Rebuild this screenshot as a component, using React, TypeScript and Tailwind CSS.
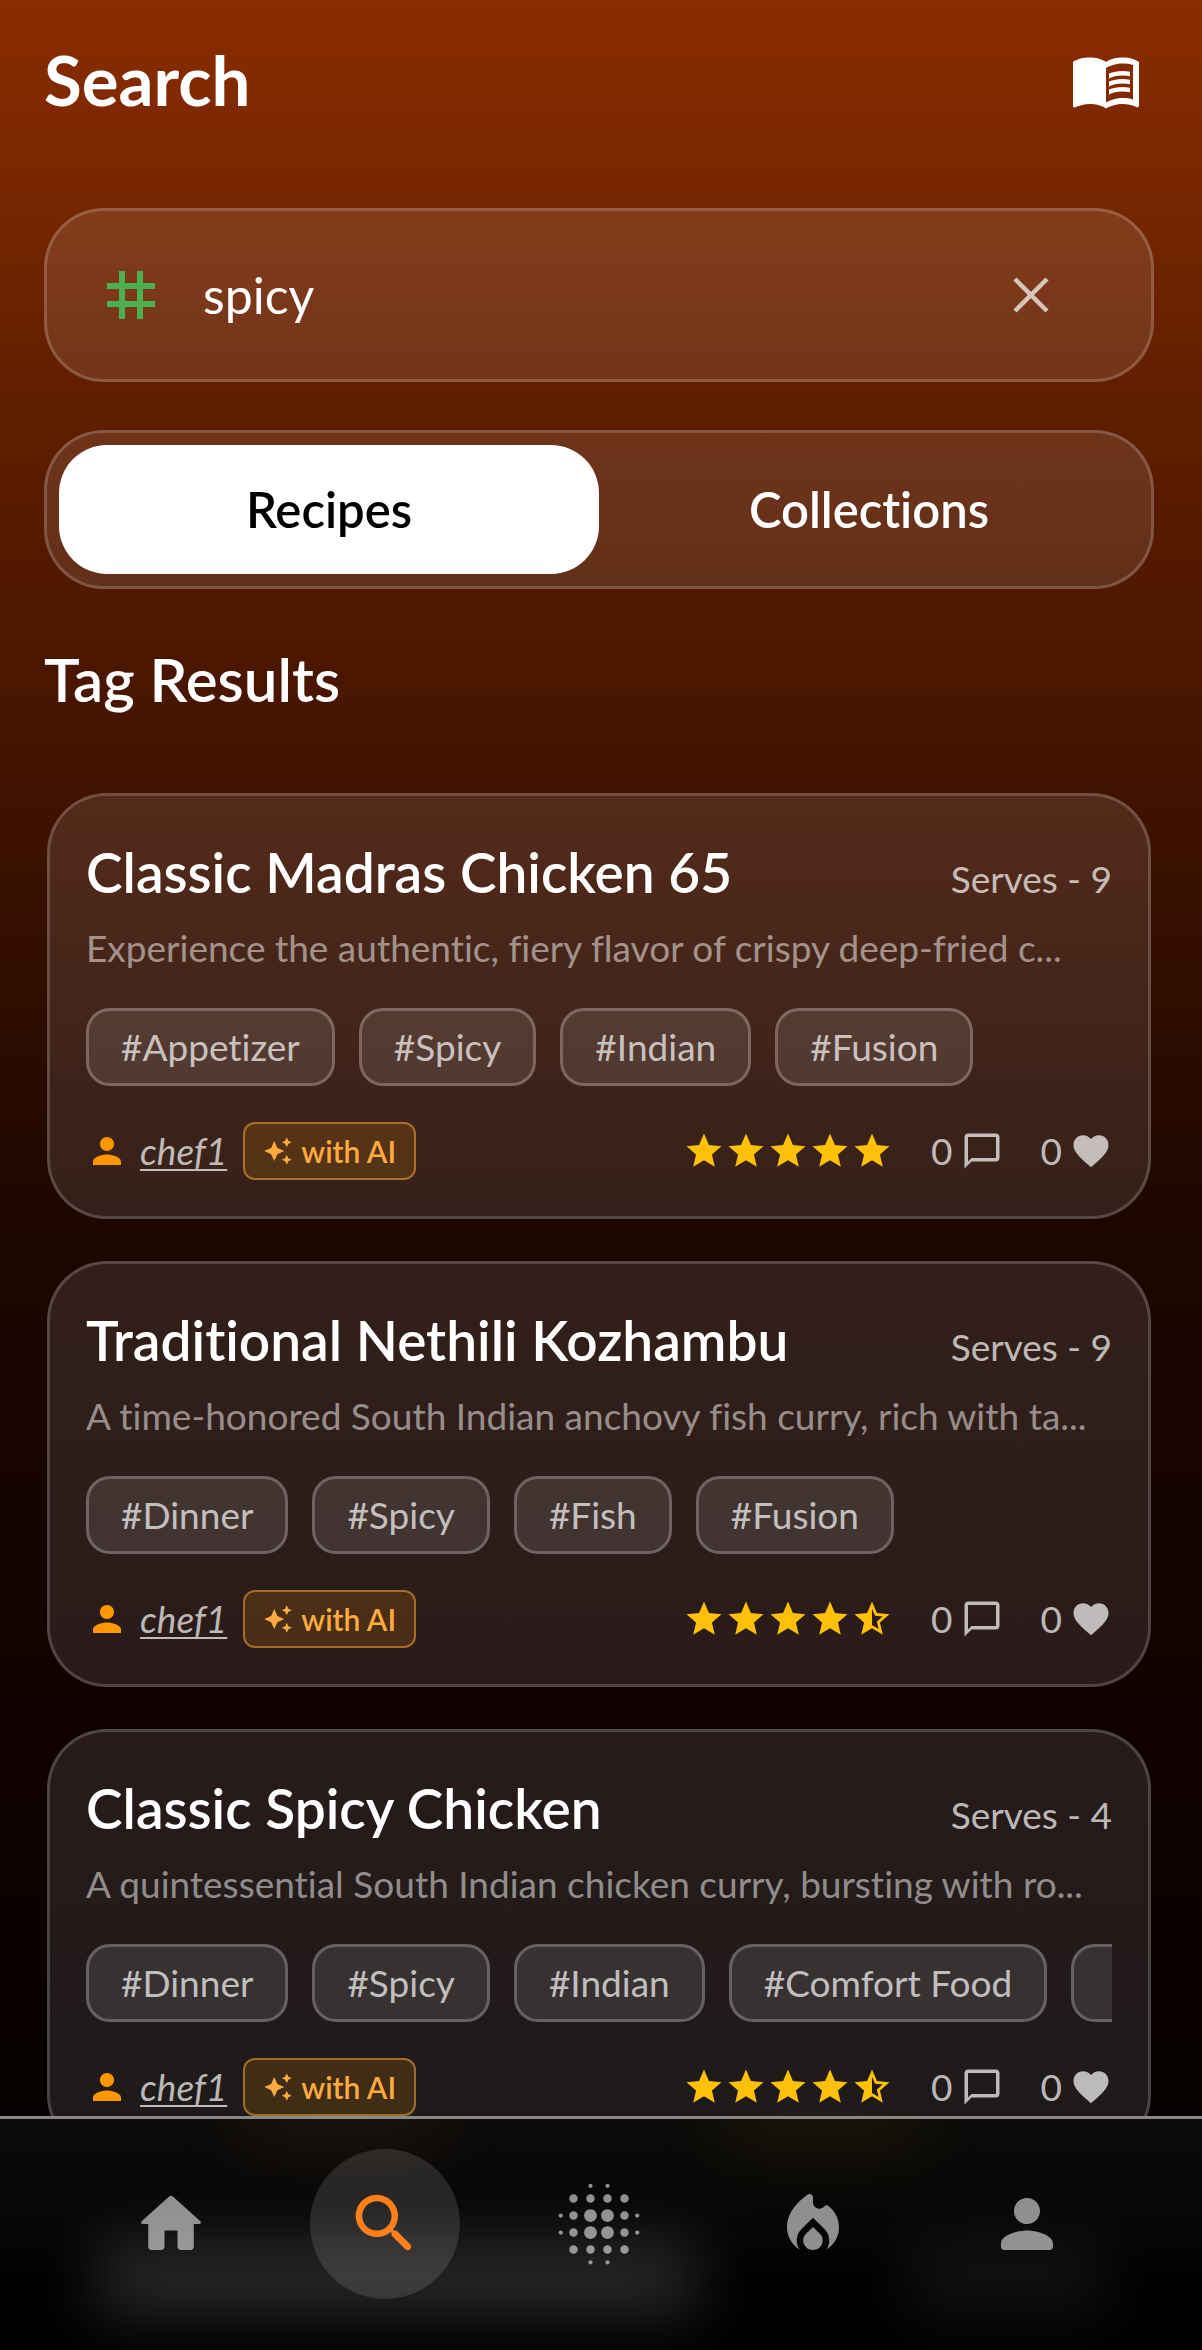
import clsx from "clsx";
import { useState } from "react";
import {
  MdAutoAwesome,
  MdBlurOn,
  MdChatBubbleOutline,
  MdFavorite,
  MdMenuBook,
  MdPerson,
  MdStar,
  MdStarHalf,
  MdTag,
} from "react-icons/md";

type Recipe = {
  title: string;
  serves: number;
  description: string;
  tags: string[];
  author: string;
  rating: number;
  comments: number;
  likes: number;
};

const recipes: Recipe[] = [
  {
    title: "Classic Madras Chicken 65",
    serves: 9,
    description: "Experience the authentic, fiery flavor of crispy deep-fried c...",
    tags: ["Appetizer", "Spicy", "Indian", "Fusion"],
    author: "chef1",
    rating: 5,
    comments: 0,
    likes: 0,
  },
  {
    title: "Traditional Nethili Kozhambu",
    serves: 9,
    description: "A time-honored South Indian anchovy fish curry, rich with ta...",
    tags: ["Dinner", "Spicy", "Fish", "Fusion"],
    author: "chef1",
    rating: 4.5,
    comments: 0,
    likes: 0,
  },
  {
    title: "Classic Spicy Chicken",
    serves: 4,
    description: "A quintessential South Indian chicken curry, bursting with ro...",
    tags: ["Dinner", "Spicy", "Indian", "Comfort Food", ""],
    author: "chef1",
    rating: 4.5,
    comments: 0,
    likes: 0,
  },
];

const navItems = [
  {
    label: "Home",
    path: "M10 19v-5h4v5c0 .55.45 1 1 1h3c.55 0 1-.45 1-1v-7h1.7c.46 0 .68-.57.33-.87L12.67 3.6c-.38-.34-.96-.34-1.34 0l-8.36 7.53c-.34.3-.13.87.33.87H5v7c0 .55.45 1 1 1h3c.55 0 1-.45 1-1z",
  },
  {
    label: "Search",
    path: "M15.5 14h-.79l-.28-.27c1.2-1.4 1.82-3.31 1.48-5.34-.47-2.78-2.79-5-5.59-5.34-4.23-.52-7.79 3.04-7.27 7.27.34 2.8 2.56 5.12 5.34 5.59 2.03.34 3.94-.28 5.34-1.48l.27.28v.79l4.25 4.25c.41.41 1.08.41 1.49 0 .41-.41.41-1.08 0-1.49L15.5 14zm-6 0C7.01 14 5 11.99 5 9.5S7.01 5 9.5 5 14 7.01 14 9.5 11.99 14 9.5 14z",
  },
  { label: "Assistant" },
  {
    label: "Trending",
    path: "M12 12.9l-2.13 2.09C9.31 15.55 9 16.28 9 17.06 9 18.68 10.35 20 12 20s3-1.32 3-2.94c0-.78-.31-1.52-.87-2.07L12 12.9z M15.56 6.55C14.38 8.02 12 7.19 12 5.3V3.77c0-.8-.89-1.28-1.55-.84C8.12 4.49 4 7.97 4 13c0 2.92 1.56 5.47 3.89 6.86-.56-.79-.89-1.76-.89-2.8 0-1.32.52-2.56 1.47-3.5L12 10.1l3.53 3.47c.95.93 1.47 2.17 1.47 3.5 0 1.02-.31 1.96-.85 2.75 1.89-1.15 3.29-3.06 3.71-5.3.61-3.28-.82-6.39-3.24-8.13-.33-.24-.8-.17-1.06.16z",
  },
  {
    label: "Profile",
    path: "M12 12c2.21 0 4-1.79 4-4s-1.79-4-4-4-4 1.79-4 4 1.79 4 4 4zm0 2c-2.67 0-8 1.34-8 4v1c0 .55.45 1 1 1h14c.55 0 1-.45 1-1v-1c0-2.66-5.33-4-8-4z",
  },
];

function Stars({ rating }: { rating: number }) {
  return (
    <div className="flex text-[42px] text-[#ffc107]" role="img" aria-label={`${rating} out of 5`}>
      {[1, 2, 3, 4, 5].map((n) => (n <= rating ? <MdStar key={n} /> : <MdStarHalf key={n} />))}
    </div>
  );
}

function RecipeCard({ recipe }: { recipe: Recipe }) {
  return (
    <article className="shrink-0 rounded-[60px] border-[3px] border-white/18 bg-white/10 p-9">
      <div className="flex h-20 items-baseline justify-between leading-[80px]">
        <h3 className="text-[55px] font-semibold">{recipe.title}</h3>
        <span className="text-[37px] text-white/70">Serves - {recipe.serves}</span>
      </div>
      <p className="mt-3 truncate text-[37px] leading-12 text-white/50">{recipe.description}</p>

      <ul className="mt-9 flex gap-6 overflow-hidden">
        {recipe.tags.map((tag) => (
          <li
            key={tag}
            className="flex h-[78px] min-w-32 shrink-0 items-center rounded-3xl border-[3px] border-white/24 bg-white/10 px-8 text-[37px] text-white/70"
          >
            {tag && `#${tag}`}
          </li>
        ))}
      </ul>

      <div className="mt-9 flex h-[58px] items-center justify-between text-[37px] text-white/70">
        <div className="flex items-center">
          <MdPerson className="text-[42px] text-[#ff9800]" />
          <a href="#chef" className="ml-3 italic underline decoration-2 underline-offset-4">
            {recipe.author}
          </a>
          <span className="ml-4 flex h-[58px] items-center gap-2 rounded-xl border-2 border-[#ffab40]/50 bg-[#ff9800]/15 px-[18px] text-[30px] font-semibold text-[#ffab40]">
            <MdAutoAwesome />
            with AI
          </span>
        </div>
        <div className="flex items-center">
          <Stars rating={recipe.rating} />
          <button type="button" aria-label="Comments" className="ml-[38px] flex items-center gap-2">
            {recipe.comments}
            <MdChatBubbleOutline className="text-[42px]" />
          </button>
          <button type="button" aria-label="Likes" className="ml-[38px] flex items-center gap-2">
            {recipe.likes}
            <MdFavorite className="text-[42px]" />
          </button>
        </div>
      </div>
    </article>
  );
}

function BottomNav() {
  return (
    <nav className="relative flex h-[234px] shrink-0 overflow-hidden border-t-[3px] border-[#8a8787] bg-linear-to-b from-[#0c0b0a] via-[#070606] to-black pt-[30px] pr-[68px] pl-16">
      {/* Frosted glow behind the icons */}
      <div className="absolute inset-0" aria-hidden="true">
        <div className="absolute -top-5 left-[20%] h-8 w-1/6 bg-[#ffab40]/15 blur-2xl" />
        <div className="absolute -top-5 left-[60%] h-8 w-1/6 bg-[#ffc107]/15 blur-2xl" />
        <div className="absolute top-[128px] left-[8%] h-16 w-1/2 bg-white/18 blur-[32px]" />
        <div className="absolute top-[128px] right-[8%] h-16 w-1/6 bg-white/8 blur-[32px]" />
      </div>

      {navItems.map(({ label, path }) => (
        <a key={label} href={`#${label.toLowerCase()}`} aria-label={label} className="relative flex flex-1 justify-center">
          <span
            className={clsx(
              "flex size-[150px] items-center justify-center rounded-full",
              label === "Search" ? "bg-white/12 text-[#ff7f1a]" : "text-white/55",
            )}
          >
            {path ? (
              <svg viewBox="0 0 24 24" className="size-[78px]" fill="currentColor">
                <path d={path} />
              </svg>
            ) : (
              <MdBlurOn className="size-[102px]" />
            )}
          </span>
        </a>
      ))}
    </nav>
  );
}

export default function App() {
  const [query, setQuery] = useState("spicy");
  const [tab, setTab] = useState("Recipes");

  return (
    <div className="flex h-screen flex-col bg-linear-[180deg,#8b2c00_0%,#752600_9%,#601e00_17%,#421300_33%,#1d0700_52%,#110200_72%,#000000_100%] font-[Lato,sans-serif] text-white [font-variant-ligatures:none]">
      <main className="min-h-0 flex-1 overflow-y-auto pr-12 pl-11 [scrollbar-width:none]">
        <header className="flex h-40 items-center justify-between pr-3">
          <h1 className="text-[69px] font-bold">Search</h1>
          <button type="button" aria-label="Cookbook">
            <MdMenuBook className="text-[72px]" />
          </button>
        </header>

        {/* Search box */}
        <div className="mt-12 flex h-[174px] items-center rounded-[60px] border-[3px] border-white/18 bg-white/10 pr-[102px] pl-12">
          <MdTag className="text-[72px] text-[#4caf50]" />
          <input
            aria-label="Search by tag"
            value={query}
            onChange={(e) => setQuery(e.target.value)}
            className="ml-9 min-w-0 flex-1 text-[50px] outline-none"
          />
          <button type="button" aria-label="Clear" onClick={() => setQuery("")} className="text-white/70">
            <svg viewBox="0 0 36 36" className="size-9" fill="none" stroke="currentColor" strokeWidth="4.5">
              <path d="M2 2l32 32M34 2L2 34" />
            </svg>
          </button>
        </div>

        {/* Tabs */}
        <div className="mt-12 flex rounded-[60px] border-[3px] border-white/18 bg-white/10 p-3">
          {["Recipes", "Collections"].map((name) => (
            <button
              key={name}
              type="button"
              onClick={() => setTab(name)}
              className={clsx(
                "h-[129px] flex-1 rounded-[48px] text-[49px] font-semibold",
                tab === name && "bg-white text-black",
              )}
            >
              {name}
            </button>
          ))}
        </div>

        <h2 className="mt-[50px] text-[60px] leading-[80px] font-semibold">Tag Results</h2>

        <section className="mx-[3px] mt-[74px] flex flex-col gap-[42px]">
          {recipes.map((recipe) => (
            <RecipeCard key={recipe.title} recipe={recipe} />
          ))}
        </section>
      </main>

      <BottomNav />
    </div>
  );
}
